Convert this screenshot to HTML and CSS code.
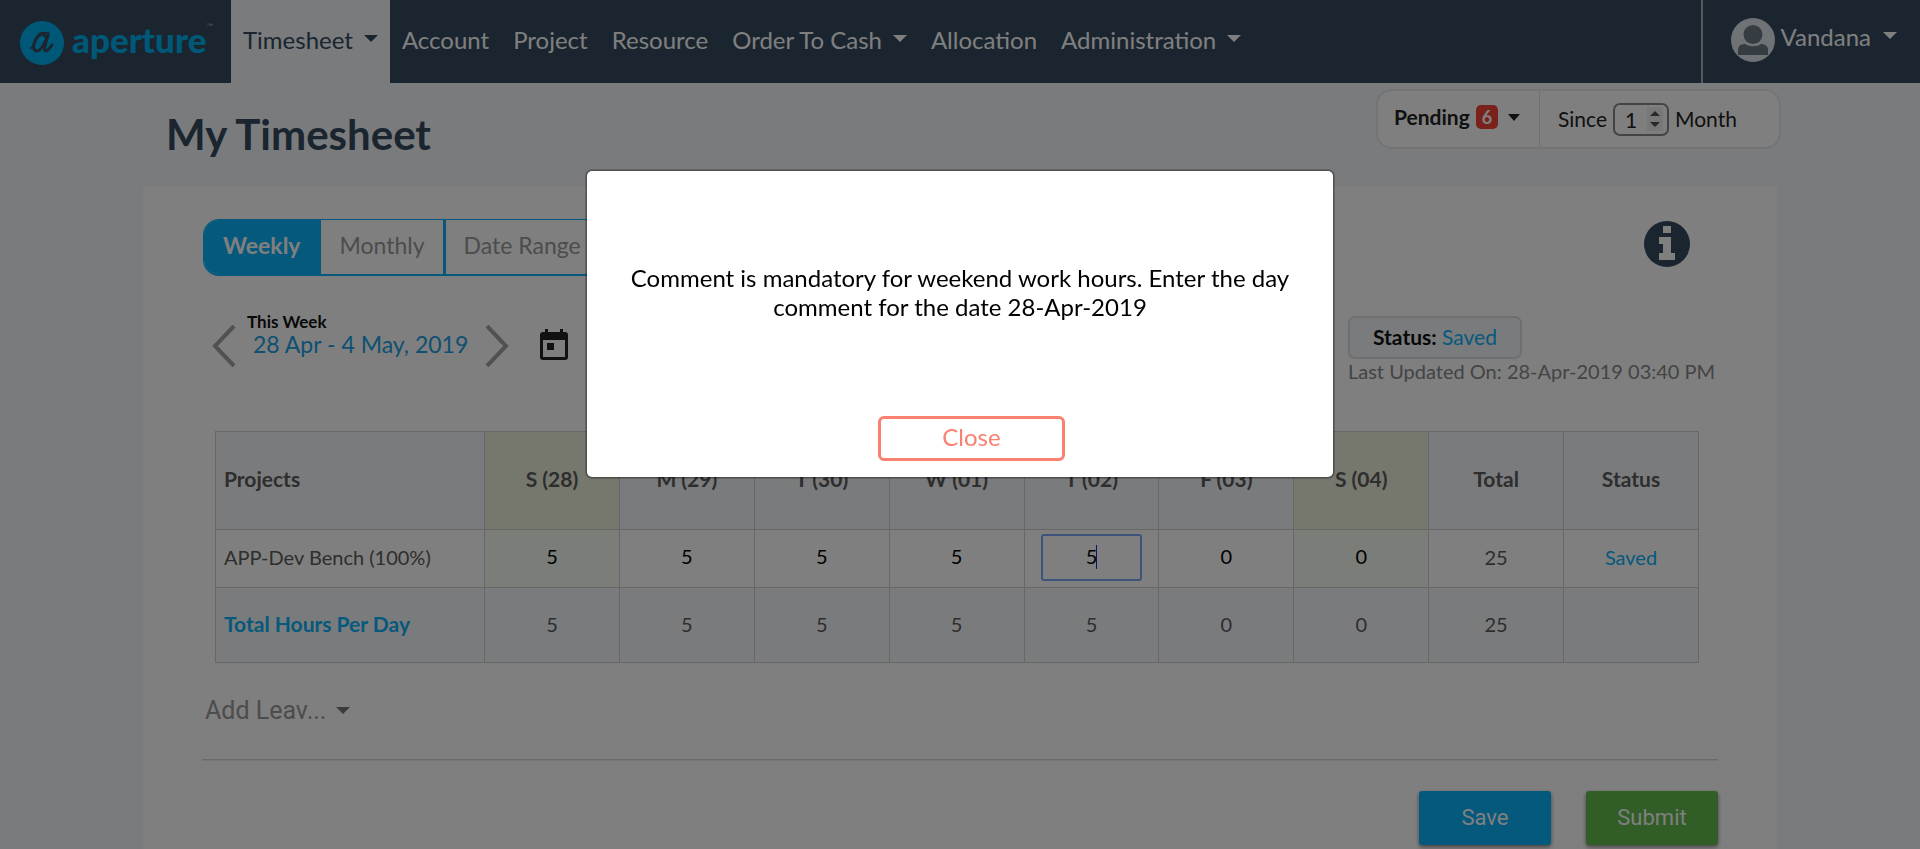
FILE: index.html
```html
<!DOCTYPE html>
<html lang="en">
<head>
<meta charset="utf-8">
<meta name="viewport" content="width=device-width, initial-scale=1">
<title>My Timesheet</title>
<link rel="stylesheet" href="styles.css">
</head>
<body>
<header class="topbar">
  <a class="brand" href="#" aria-label="aperture">
    <svg class="brand-mark" viewBox="0 0 44 44" aria-hidden="true">
      <circle cx="22" cy="22" r="22" fill="#00b0f0"/>
      <path d="M25.500 15.500C23 11.500 19 12.500 16 18C13 23.500 12.500 30 16.500 30C20.500 30 25 22 28 14.500C26 21 23.500 27.500 25 29.500C26.500 31 29.500 27.500 32 24" fill="none" stroke="#344a5e" stroke-width="3" stroke-linecap="round" stroke-linejoin="round"/>
      <path d="M20 12.500C23.500 11 27 12 29 12.500M11 27L14 25" fill="none" stroke="#344a5e" stroke-width="2" stroke-linecap="round"/>
    </svg>
    <span class="brand-name">aperture</span><span class="brand-tm">™</span>
  </a>
  <nav class="menu">
    <a class="menu-item is-active" href="#">Timesheet <span class="caret"></span></a>
    <a class="menu-item" href="#">Account</a>
    <a class="menu-item" href="#">Project</a>
    <a class="menu-item" href="#">Resource</a>
    <a class="menu-item" href="#">Order To Cash <span class="caret"></span></a>
    <a class="menu-item" href="#">Allocation</a>
    <a class="menu-item" href="#">Administration <span class="caret"></span></a>
  </nav>
  <button class="user" type="button">
    <svg class="avatar" viewBox="0 0 44 44" aria-hidden="true">
      <circle cx="22" cy="22" r="22" fill="#e1e6ea"/>
      <ellipse cx="22" cy="16.500" rx="9.500" ry="9.500" fill="#6b7a86"/>
      <path d="M7 37V32C7 28 10 26 14 26C18 29 26 29 30 26C34 26 37 28 37 32V37Z" fill="#6b7a86"/>
    </svg>
    <span class="user-name">Vandana <span class="caret"></span></span>
  </button>
</header>

<main class="page">
  <div class="page-head">
    <h1 class="title">My Timesheet</h1>
    <div class="filter">
      <button class="pending" type="button">Pending <span class="badge">6</span> <span class="caret caret-sm"></span></button>
      <div class="since">
        <label for="months">Since</label>
        <span class="stepper">
          <input class="stepper-input" id="months" type="number" value="1" min="1">
          <svg class="stepper-arrows" viewBox="0 0 16 24" aria-hidden="true">
            <rect width="16" height="24" fill="#f0f0f0"/>
            <path d="M3 9L8 4L13 9ZM3 15L8 20L13 15Z" fill="#505050"/>
          </svg>
        </span>
        <span>Month</span>
      </div>
    </div>
  </div>

  <section class="card">
    <div class="card-top">
      <div class="tabs">
        <button class="tab is-active" type="button">Weekly</button>
        <button class="tab" type="button">Monthly</button>
        <button class="tab" type="button">Date Range</button>
      </div>
      <button class="info" type="button" aria-label="Information">
        <svg viewBox="0 0 46 46" aria-hidden="true">
          <circle cx="23" cy="23" r="23" fill="#344a5e"/>
          <path d="M19 5h8v7h-8zM15 16h12v16h4v7H15v-7h4v-9h-4z" fill="#fff"/>
        </svg>
      </button>
    </div>

    <div class="period">
      <div class="week">
        <button class="arrow" type="button" aria-label="Previous week">
          <svg viewBox="0 0 24 42" aria-hidden="true"><path d="M22 1L3 21L22 41" fill="none" stroke="#a3a3a3" stroke-width="4"/></svg>
        </button>
        <div class="week-text">
          <strong class="week-label">This Week</strong>
          <span class="week-range">28 Apr - 4 May, 2019</span>
        </div>
        <button class="arrow" type="button" aria-label="Next week">
          <svg viewBox="0 0 24 42" aria-hidden="true"><path d="M2 1L21 21L2 41" fill="none" stroke="#a3a3a3" stroke-width="4"/></svg>
        </button>
        <button class="calendar" type="button" aria-label="Pick a date">
          <svg viewBox="0 0 28 31" aria-hidden="true">
            <path fill="#222" fill-rule="evenodd" d="M5 0h3v3h12V0h3v3h2a3 3 0 0 1 3 3v22a3 3 0 0 1-3 3H3a3 3 0 0 1-3-3V6a3 3 0 0 1 3-3h2zM3 11v17h22V11zM7 14h7v7H7z"/>
          </svg>
        </button>
      </div>
      <div class="state">
        <p class="state-box"><strong>Status:</strong> <span class="blue">Saved</span></p>
        <p class="updated">Last Updated On: 28-Apr-2019 03:40 PM</p>
      </div>
    </div>

    <table class="sheet">
      <thead>
        <tr>
          <th class="project" scope="col">Projects</th>
          <th class="weekend" scope="col">S (28)</th><th scope="col">M (29)</th><th scope="col">T (30)</th><th scope="col">W (01)</th><th scope="col">T (02)</th><th scope="col">F (03)</th><th class="weekend" scope="col">S (04)</th>
          <th scope="col">Total</th><th scope="col">Status</th>
        </tr>
      </thead>
      <tbody>
        <tr>
          <td class="project">APP-Dev Bench (100%)</td>
          <td class="weekend"><input class="hours" aria-label="Sunday 28" value="5"></td>
          <td><input class="hours" aria-label="Monday 29" value="5"></td>
          <td><input class="hours" aria-label="Tuesday 30" value="5"></td>
          <td><input class="hours" aria-label="Wednesday 01" value="5"></td>
          <td><span class="editing"><input class="hours is-focused" aria-label="Thursday 02" value="5"></span></td>
          <td><input class="hours" aria-label="Friday 03" value="0"></td>
          <td class="weekend"><input class="hours" aria-label="Saturday 04" value="0"></td>
          <td>25</td>
          <td class="blue">Saved</td>
        </tr>
      </tbody>
      <tfoot>
        <tr>
          <th class="project blue" scope="row">Total Hours Per Day</th>
          <td>5</td><td>5</td><td>5</td><td>5</td><td>5</td><td>0</td><td>0</td><td>25</td><td></td>
        </tr>
      </tfoot>
    </table>

    <div class="leave">
      <select class="leave-select" aria-label="Add leave"><option>Add Leav...</option></select>
      <span class="caret leave-caret"></span>
    </div>

    <div class="actions">
      <button class="action save" type="button">Save</button>
      <button class="action submit" type="button">Submit</button>
    </div>
  </section>
</main>

<div class="overlay">
  <div class="modal" role="dialog" aria-modal="true" aria-describedby="message">
    <p class="message" id="message">Comment is mandatory for weekend work hours. Enter the day comment for the date 28-Apr-2019</p>
    <button class="close" type="button">Close</button>
  </div>
</div>
</body>
</html>
```

FILE: styles.css
```css
:root {
  --navy: #344a5e;
  --blue: #0ab2f8;
  --line: #cfcfcf;
  --pale: #f4f6fa;
}

* { box-sizing: border-box; }

body {
  margin: 0;
  min-height: 100vh;
  overflow: hidden;
  display: flex;
  flex-direction: column;
  background: var(--pale);
  color: #222;
  font: 20px/24px Lato, "Open Sans", sans-serif;
}

button, input, select { font: inherit; color: inherit; }
button { border: 0; padding: 0; background: none; cursor: pointer; }
a { color: inherit; text-decoration: none; }
p, h1 { margin: 0; }
svg { display: block; }
.blue { color: var(--blue); }

.caret {
  display: inline-block;
  border: 7px solid transparent;
  border-top-color: currentColor;
  border-bottom: 0;
  margin: 0 0 2px 4px;
}
.caret-sm { border-width: 7px 6px 0; margin-bottom: 0; }

/* Top bar */
.topbar {
  display: flex;
  height: 83px;
  background: var(--navy);
  color: #fff;
  font-size: 24px;
}
.brand {
  display: flex;
  align-items: center;
  width: 231px;
  padding: 3px 0 0 20px;
  color: #00b0f0;
}
.brand-mark { width: 44px; height: 44px; margin-right: 8px; }
.brand-name { font-size: 35px; line-height: 44px; font-weight: 900; padding-bottom: 8px; }
.brand-tm { align-self: flex-start; padding-top: 12px; font-size: 9px; color: #9aa5af; }
.menu { display: flex; flex: 1; }
.menu-item { display: flex; align-items: center; gap: 7px; padding: 0 12px 4px; }
.menu-item.is-active { background: var(--pale); color: var(--navy); }
.user {
  display: flex;
  align-items: center;
  gap: 6px;
  padding: 0 23px 4px 28px;
  border-left: 2px solid #b0b0b0;
}
.avatar { width: 44px; height: 44px; }
.user-name { display: flex; align-items: center; gap: 8px; padding-bottom: 6px; }

/* Heading and filter */
.page { display: flex; flex-direction: column; flex: 1; padding: 0 143px; }
.page-head { display: flex; justify-content: space-between; align-items: flex-start; height: 104px; padding: 6px 0 0 23px; }
.title { padding-top: 20px; font-size: 42px; line-height: 50px; color: var(--navy); }
.filter {
  display: flex;
  width: 405px;
  height: 60px;
  margin-right: -4px;
  background: #fff;
  border: 2px solid #e6e8ea;
  border-radius: 16px;
}
.pending { display: flex; align-items: center; gap: 6px; width: 162px; padding: 0 0 4px 16px; font-size: 21px; font-weight: 700; border-right: 1px solid #e0e0e0; }
.badge { padding: 0 6px; border-radius: 5px; background: #f44336; color: #fff; font-size: 18px; }
.since { display: flex; align-items: center; gap: 6px; padding-left: 18px; font-size: 21px; }
.stepper { position: relative; display: flex; }
.stepper-input { width: 56px; height: 33px; padding: 0 0 0 10px; border: 2px solid #888; border-radius: 7px; background: #fff; appearance: textfield; }
.stepper-input::-webkit-inner-spin-button { appearance: none; }
.stepper-arrows { position: absolute; top: 4px; right: 6px; width: 16px; height: 24px; }

/* Card */
.card { flex: 1; padding: 32px 59px 3px; background: #fff; }
.card-top { display: flex; justify-content: space-between; align-items: flex-start; padding-right: 28px; }
.tabs { display: flex; height: 57px; margin-left: 1px; border: 1px solid var(--blue); border-bottom-width: 2px; border-radius: 16px; overflow: hidden; }
.tab { padding: 0 18px 4px; font-size: 23px; color: #999; border-left: 3px solid var(--blue); }
.tab.is-active { padding: 0 21px 4px 19px; background: var(--blue); color: #fff; border: 0; font-weight: 700; }
.tab.is-active + .tab { border-left: 0; }
.info { width: 46px; height: 46px; margin-top: 2px; }

.period { display: flex; justify-content: space-between; padding: 36px 0 0 10px; }
.week { display: flex; align-items: flex-start; }
.arrow { width: 24px; height: 42px; margin-top: 13px; }
.week-text { display: flex; flex-direction: column; width: 249px; padding-left: 11px; color: #111; }
.week-label { font-size: 17px; line-height: 20px; }
.week-range { padding-left: 6px; font-size: 23px; color: #1aa0e4; }
.calendar { width: 28px; height: 31px; margin: 17px 0 0 31px; }
.state { width: 370px; padding-top: 4px; white-space: nowrap; }
.state-box { width: fit-content; padding: 7px 23px 8px; border: 2px solid #dcdee0; border-radius: 7px; background: var(--pale); color: #111; font-size: 21px; }
.updated { color: #888; }

/* Timesheet grid */
.sheet { width: calc(100% - 32px); margin: 48px 0 0 13px; table-layout: fixed; border-collapse: collapse; text-align: center; color: #5c5c5c; }
.sheet th, .sheet td { padding: 0 0 3px; border: 1px solid var(--line); }
.sheet th { font-size: 21px; }
.sheet .project { width: 269px; padding-left: 8px; text-align: left; }
.sheet thead tr { height: 98px; background: var(--pale); }
.sheet tbody tr { height: 58px; }
.sheet tfoot tr { height: 75px; background: var(--pale); }
.sheet .weekend { background: #f7fbf0; }
.sheet thead .weekend { background: #ecf1dc; }
.sheet .blue { color: var(--blue); }
.hours { display: block; width: 101px; height: 47px; margin: 0 auto; padding: 0 0 2px; border: 0; background: none; text-align: center; color: #000; }
.editing { position: relative; display: block; }
.editing::after { content: ""; position: absolute; left: calc(50% + 5px); top: 11px; width: 1px; height: 24px; background: #1d2cc0; }
.hours.is-focused { border: 2px solid #7aa7f5; border-radius: 3px; }

/* Leave selector */
.leave { display: flex; align-items: center; height: 97px; padding-left: 3px; border-bottom: 1px solid #d2d2d2; box-shadow: 0 1px 1px #ececec; color: #777; }
.leave-select { width: 126px; height: 30px; appearance: none; border: 0; padding: 0; background: none; font: 25px/30px Roboto, "Liberation Sans", sans-serif; color: #999; }
.leave-caret { margin-left: 5px; }

/* Actions */
.actions { display: flex; justify-content: flex-end; gap: 35px; padding-top: 31px; }
.action { width: 132px; height: 54px; border-radius: 3px; color: #fff; font: 22px/26px Roboto, "Liberation Sans", sans-serif; box-shadow: 0 2px 4px #888; }
.save { background: var(--blue); }
.submit { background: #62ba4c; }

/* Dialog */
.overlay {
  position: fixed;
  inset: 0;
  display: flex;
  justify-content: center;
  align-items: flex-start;
  padding: 170px 16px 0;
  background: rgba(0, 0, 0, .5);
}
.modal {
  display: flex;
  flex-direction: column;
  align-items: center;
  width: 100%;
  max-width: 748px;
  padding: 92px 40px 16px;
  border: 1px solid rgba(0, 0, 0, .2);
  border-radius: 6px;
  background: #fff;
  background-clip: padding-box;
  box-shadow: 0 0 0 1px rgba(0, 0, 0, .2);
}
.message { font-size: 24px; line-height: 29px; text-align: center; color: #000; }
.close { width: 187px; height: 45px; margin: 95px 0 0 23px; padding-bottom: 4px; border: 3px solid #fa8072; border-radius: 6px; color: #fa8072; font-size: 24px; }

@media (max-width: 1300px) {
  .page { padding: 0 24px; }
}
```
